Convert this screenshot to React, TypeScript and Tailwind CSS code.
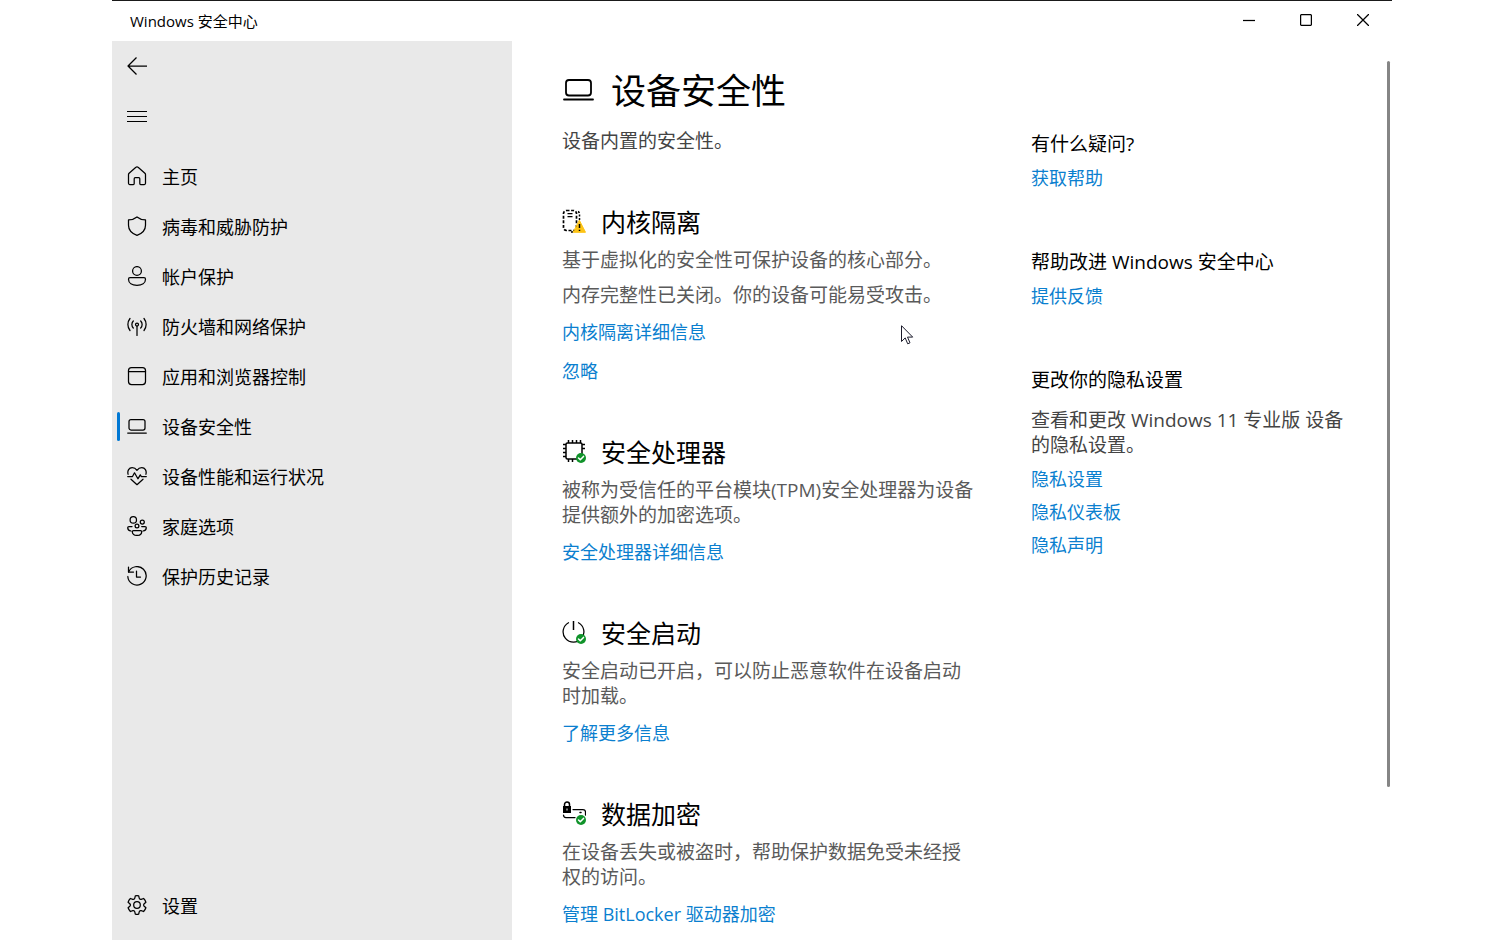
import type { ReactNode } from "react";

const Icon = ({ children, size = 20 }: { children: ReactNode; size?: number }) => (
  <svg
    width={size}
    height={size}
    viewBox={`0 0 ${size} ${size}`}
    fill="none"
    stroke="currentColor"
    strokeWidth="1.25"
    strokeLinecap="round"
    strokeLinejoin="round"
    className="shrink-0"
    aria-hidden="true"
  >
    {children}
  </svg>
);

const icons = {
  home: (
    <path d="M8.9 1.3 2.1 7.2c-.4.4-.6.8-.6 1.3v8.8c0 .7.5 1.2 1.2 1.2h3.6c.5 0 .9-.4.9-.9v-4.9c0-.6.4-1 1-1h3.6c.6 0 1 .4 1 1v4.9c0 .5.4.9.9.9h3.6c.7 0 1.2-.5 1.2-1.2V8.5c0-.5-.2-.9-.6-1.3l-6.8-5.9c-.6-.6-1.6-.6-2.2 0Z" />
  ),
  shield: (
    <path d="M10 .9c2.3 1.9 5 2.9 8.5 3v5.300c0 4.900-3 8.100-8.500 10.100C4.500 17.300 1.500 14.100 1.500 9.200V3.900C5 3.800 7.700 2.800 10 .9Z" />
  ),
  account: (
    <>
      <circle cx="10" cy="5" r="4.4" />
      <path d="M3 11.700h14c.9 0 1.500.7 1.500 1.600 0 3.700-3.600 6-8.500 6s-8.500-2.300-8.500-6c0-.9.600-1.600 1.500-1.600Z" />
    </>
  ),
  network: (
    <>
      <circle cx="10" cy="8.500" r="1.500" />
      <path d="M10 10v9.500M6.300 12a5 5 0 0 1 0-7M13.700 5a5 5 0 0 1 0 7" />
      <path d="M3 14.500a9.600 9.600 0 0 1 0-12M17 2.500a9.600 9.600 0 0 1 0 12" />
    </>
  ),
  app: (
    <>
      <rect x="1.500" y="1.500" width="17" height="17" rx="3" />
      <path d="M1.500 5.500h17" />
    </>
  ),
  device: (
    <>
      <rect x="2" y="3.500" width="16" height="10.500" rx="2" />
      <path d="M.7 17h18.600" />
    </>
  ),
  health: (
    <>
      <path d="M1.100 8.300C.1 4.600 2 1.600 5.200 1.600c2.100 0 3.600 1 4.800 2.700 1.200-1.700 2.700-2.700 4.800-2.700 3.200 0 5.100 3 4.100 6.700" />
      <path d="M.7 10.500h4.800l2-3.700 3.400 6 2.400-3.900 1 1.600h5M4 13.200l6 5.500 6-5.500" />
    </>
  ),
  family: (
    <>
      <circle cx="6.300" cy="3.900" r="3.200" />
      <circle cx="15.300" cy="6" r="2" />
      <circle cx="10" cy="10" r="1.900" />
      <path d="M5 10.500H2c-.8 0-1.300.5-1.300 1.200C.7 13.500 2 14.700 4 15M14.700 10.500H18c.8 0 1.300.5 1.300 1.200 0 1.800-1.300 3-3.300 3.300M6.500 14.500h7c.8 0 1.200.5 1.200 1.200 0 2.300-2 3.700-4.700 3.700s-4.700-1.400-4.700-3.700c0-.7.400-1.200 1.200-1.200Z" />
    </>
  ),
  history: (
    <>
      <path d="M1.500 1v5h5" />
      <path d="M1.600 6A9.200 9.200 0 1 1 .8 10.500" />
      <path d="M9.500 5v6h4" />
    </>
  ),
  settings: (
    <>
      <circle cx="10" cy="10" r="3.300" />
      <path d="M8.300.8a8.500 8.500 0 0 1 3.400 0l.5 2.300c.2.900 1.100 1.400 2 1.200l2.400-.8a9.500 9.500 0 0 1 2.300 3.700l-1.700 1.600c-.7.700-.7 1.700 0 2.400l1.700 1.600a9.500 9.500 0 0 1-2.300 3.700l-2.400-.8c-.9-.2-1.800.3-2 1.200l-.5 2.300a8.500 8.500 0 0 1-3.400 0l-.5-2.300c-.2-.9-1.100-1.400-2-1.200l-2.400.8a9.500 9.500 0 0 1-2.300-3.700l1.700-1.600c.7-.7.7-1.700 0-2.400L1.100 7.200a9.500 9.500 0 0 1 2.300-3.700l2.400.8c.9.2 1.800-.3 2-1.200Z" />
    </>
  ),
};

const OkBadge = () => (
  <>
    <circle cx="19" cy="19" r="5" fill="#10932a" stroke="none" />
    <path d="m16.500 19 1.800 1.800 3.200-3.400" stroke="#fff" strokeWidth="1.500" />
  </>
);

const isolationIcon = (
  <Icon size={24}>
    <rect x="1.500" y="1.500" width="13" height="20" rx="3" strokeWidth="1.700" strokeDasharray="3 1.600" strokeLinecap="butt" />
    <path d="M5.500 4.500h5M5.500 7.500h5" strokeLinecap="butt" />
    <path d="M16 2.500c1 .5 1.500 1.300 1.500 2.500v6M9 23h3" strokeDasharray="2 1.500" strokeLinecap="butt" strokeWidth="1.500" />
    <path d="M17.500 11.500 23.500 23.300h-12Z" fill="#fdc416" stroke="#fdc416" strokeWidth="1" />
    <path d="M17.500 15v4M17.500 20.700v1.300" strokeLinecap="butt" strokeWidth="1.500" />
  </Icon>
);

const processorIcon = (
  <Icon size={24}>
    <rect x="4" y="4" width="16" height="16" rx="1.500" strokeWidth="1.500" />
    <path d="M6.500 1v3M10.500 1v3M14.500 1v3M18.500 1v3M6.500 20v3M10.500 20v3M1 5.500h3M1 9.500h3M1 13.500h3M1 17.500h3M20 5.500h3M20 9.500h3" strokeLinecap="butt" strokeWidth="1.500" />
    <OkBadge />
  </Icon>
);

const bootIcon = (
  <Icon size={24}>
    <path d="M11.500 1v9" strokeLinecap="butt" strokeWidth="1.500" />
    <path d="M6.500 2.700A10.400 10.400 0 1 0 16.500 2.700" />
    <OkBadge />
  </Icon>
);

const encryptionIcon = (
  <Icon size={24}>
    <path d="M2.500 5V3.500a2.500 2.500 0 0 1 5 0V5" strokeWidth="1.500" />
    <path d="M1 5h8v7H1Z" fill="currentColor" stroke="none" />
    <path d="M4.500 7.500h1v2h-1Z" fill="#fff" stroke="none" />
    <path d="M11 8.500h10c1.500 0 2.500 1 2.500 2.500v3M1.500 14c0 1.500 1 2.500 2.500 2.500h9" />
    <path d="M18 11.500h1" strokeWidth="1.500" />
    <OkBadge />
  </Icon>
);

const navItems = [
  { label: "主页", icon: icons.home },
  { label: "病毒和威胁防护", icon: icons.shield },
  { label: "帐户保护", icon: icons.account },
  { label: "防火墙和网络保护", icon: icons.network },
  { label: "应用和浏览器控制", icon: icons.app },
  { label: "设备安全性", icon: icons.device, active: true },
  { label: "设备性能和运行状况", icon: icons.health },
  { label: "家庭选项", icon: icons.family },
  { label: "保护历史记录", icon: icons.history },
];

const NavItem = ({ label, icon, active }: { label: string; icon: ReactNode; active?: boolean }) => (
  <button
    type="button"
    aria-current={active ? "page" : undefined}
    className="flex h-[50px] w-full items-center pl-[5px] text-left text-[18px]"
  >
    <span className={`mr-[7px] h-[29px] w-[3px] rounded-full ${active ? "bg-[#0078d4]" : "bg-transparent"}`} />
    <Icon>{icon}</Icon>
    <span className="ml-[15px] pt-[2px]">{label}</span>
  </button>
);

const Link = ({ children }: { children: ReactNode }) => (
  <a href="#" className="block w-fit text-[18px] leading-[25px] text-[#0b7fcf]">
    {children}
  </a>
);

const Section = ({ title, icon, children }: { title: string; icon: ReactNode; children: ReactNode }) => (
  <section className="mt-[52px]">
    <div className="mb-[10px] flex h-8 items-center gap-[15px]">
      <span className="pb-[3px]">{icon}</span>
      <h2 className="text-[25px] leading-8">{title}</h2>
    </div>
    {children}
  </section>
);

const Text = ({ children }: { children: ReactNode }) => (
  <p className="text-[19px] leading-[25px] text-[#5a5a5a]">{children}</p>
);

const TitleBar = () => (
  <header className="flex h-[41px] shrink-0 items-center justify-between border-t border-[#1a1a1a] pr-px pl-[18px]">
    <span className="text-[15px]">Windows 安全中心</span>
    <div className="flex self-start">
      <button type="button" aria-label="最小化" className="flex h-[38px] w-[57px] items-center justify-center">
        <Icon size={12}>
          <path d="M0 6.500h12" strokeLinecap="butt" />
        </Icon>
      </button>
      <button type="button" aria-label="最大化" className="flex h-[38px] w-[57px] items-center justify-center">
        <Icon size={12}>
          <rect x=".6" y=".6" width="10.800" height="10.800" rx="1" />
        </Icon>
      </button>
      <button type="button" aria-label="关闭" className="flex h-[38px] w-[57px] items-center justify-center">
        <Icon size={12}>
          <path d="m.5.5 11 11M11.500.5l-11 11" />
        </Icon>
      </button>
    </div>
  </header>
);

const Sidebar = () => (
  <nav className="flex w-[400px] shrink-0 flex-col bg-[#e9e9e9]">
    <button type="button" aria-label="返回" className="flex h-[50px] w-[50px] items-center justify-center">
      <Icon>
        <path d="M1 10h19M9.500 1.500 1 10l8.500 8.500" strokeLinecap="butt" />
      </Icon>
    </button>
    <button type="button" aria-label="菜单" className="flex h-[50px] w-[50px] items-center justify-center">
      <Icon>
        <path d="M0 5.500h20M0 10.500h20M0 15.500h20" strokeLinecap="butt" strokeWidth="1" />
      </Icon>
    </button>
    <div className="mt-[10px]">
      {navItems.map((item) => (
        <NavItem key={item.label} {...item} />
      ))}
    </div>
    <div className="mt-auto mb-[10px]">
      <NavItem label="设置" icon={icons.settings} />
    </div>
  </nav>
);

const DeviceSecurity = () => (
  <div className="w-[416px] shrink-0 pt-[22px] pb-3">
    <div className="flex h-14 items-center gap-[17px]">
      <Icon size={32}>
        <rect x="4" y="5" width="25" height="15.500" rx="3" strokeWidth="1.800" />
        <path d="M2 24.500h29" strokeWidth="1.800" />
      </Icon>
      <h1 className="text-[35px]">设备安全性</h1>
    </div>
    <p className="mt-[10px] text-[19px] leading-[25px] text-[#444]">设备内置的安全性。</p>

    <Section title="内核隔离" icon={isolationIcon}>
      <Text>基于虚拟化的安全性可保护设备的核心部分。</Text>
      <div className="mt-[10px]">
        <Text>内存完整性已关闭。你的设备可能易受攻击。</Text>
      </div>
      <div className="mt-3 flex flex-col gap-[14px]">
        <Link>内核隔离详细信息</Link>
        <Link>忽略</Link>
      </div>
    </Section>

    <Section title="安全处理器" icon={processorIcon}>
      <Text>被称为受信任的平台模块(TPM)安全处理器为设备提供额外的加密选项。</Text>
      <div className="mt-3">
        <Link>安全处理器详细信息</Link>
      </div>
    </Section>

    <Section title="安全启动" icon={bootIcon}>
      <Text>安全启动已开启，可以防止恶意软件在设备启动时加载。</Text>
      <div className="mt-3">
        <Link>了解更多信息</Link>
      </div>
    </Section>

    <Section title="数据加密" icon={encryptionIcon}>
      <Text>在设备丢失或被盗时，帮助保护数据免受未经授权的访问。</Text>
      <div className="mt-3">
        <Link>管理 BitLocker 驱动器加密</Link>
      </div>
    </Section>
  </div>
);

const HelpPanel = () => (
  <aside className="ml-[53px] flex max-w-[322px] min-w-0 flex-1 flex-col gap-[59px] pt-[91px]">
    <section>
      <h3 className="mb-[9px] text-[19px] leading-[25px]">有什么疑问?</h3>
      <Link>获取帮助</Link>
    </section>
    <section>
      <h3 className="mb-[9px] text-[19px] leading-[25px]">帮助改进 Windows 安全中心</h3>
      <Link>提供反馈</Link>
    </section>
    <section>
      <h3 className="mb-[15px] text-[19px] leading-[25px]">更改你的隐私设置</h3>
      <p className="mb-[9px] text-[19px] leading-[25px] text-[#444]">
        查看和更改 Windows 11 专业版 设备的隐私设置。
      </p>
      <div className="flex flex-col gap-2">
        <Link>隐私设置</Link>
        <Link>隐私仪表板</Link>
        <Link>隐私声明</Link>
      </div>
    </section>
  </aside>
);

const App = () => {
  return (
    <div className="min-h-screen bg-white px-28 font-['Open_Sans','Noto_Sans_CJK_SC',sans-serif] text-black" lang="zh-CN">
      <div className="flex min-h-screen flex-col">
        <TitleBar />
        <div className="flex flex-1">
          <Sidebar />
          <main className="relative flex min-w-0 flex-1 pl-[50px]">
            <DeviceSecurity />
            <HelpPanel />
            <div className="mt-5 mr-[2px] ml-auto h-[726px] w-[3px] rounded-full bg-[#858585]" />
            {/* mouse pointer */}
            <svg className="absolute top-[284px] left-[389px]" width="13" height="20" viewBox="0 0 13 20" aria-hidden="true">
              <path d="M.5.700v15.800l3.700-3.600 2.500 5.900 2.300-1-2.500-5.700h5.200Z" fill="#fff" stroke="#1a1a2a" />
            </svg>
          </main>
        </div>
      </div>
    </div>
  );
};

export default App;
